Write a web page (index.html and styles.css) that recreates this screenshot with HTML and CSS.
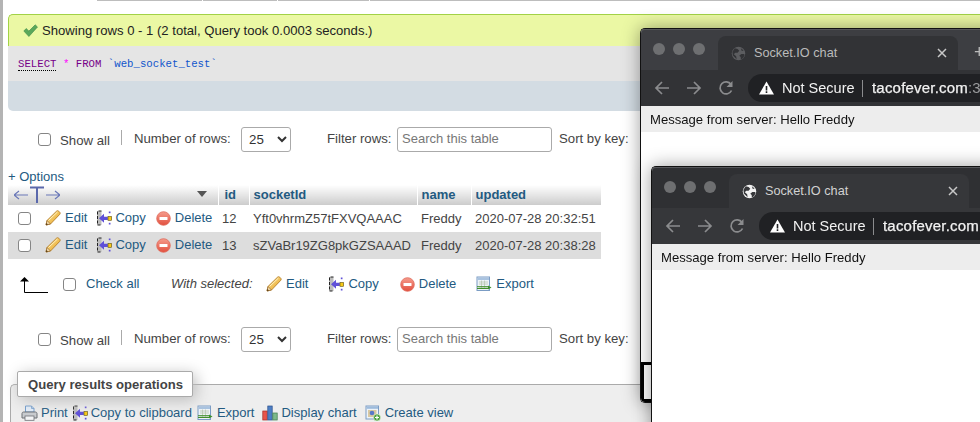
FILE: index.html
```html
<!DOCTYPE html>
<html lang="en">
<head>
<meta charset="utf-8">
<title>phpMyAdmin and Socket.IO chat</title>
<link rel="stylesheet" href="styles.css">
</head>
<body>
<svg class="defs" width="0" height="0" aria-hidden="true">
  <defs>
    <linearGradient id="redg" x1="0" y1="0" x2="0" y2="1"><stop offset="0" stop-color="#f59c8c"/><stop offset="1" stop-color="#e2503f"/></linearGradient>
    <linearGradient id="peng" x1="0" y1="0" x2="1" y2="1"><stop offset="0" stop-color="#fbe08a"/><stop offset="1" stop-color="#e8a52c"/></linearGradient>
    <symbol id="i-pencil" viewBox="0 0 16 16">
      <path d="M1 15l1-4.500L11.500 1.200c.7-.6 1.600-.6 2.200 0l1 1c.6.7.6 1.500 0 2.200L5.500 14z" fill="url(#peng)" stroke="#b5802a" stroke-width=".9" stroke-linejoin="round"/>
      <path d="M1 15l1-4.500 3.500 3.500z" fill="#f3d9a8" stroke="#8a5a20" stroke-width=".6"/>
      <path d="M1 15l.4-2 1.600 1.600z" fill="#4a3210"/>
      <path d="M3.500 10.500L12.500 2" stroke="#fff3c4" stroke-width="1"/>
    </symbol>
    <symbol id="i-copy" viewBox="0 0 15 16">
      <rect x="0" y="1" width="4.500" height="14" fill="#bdbdbd"/>
      <path d="M4.500 1H.5v14h4" fill="none" stroke="#222" stroke-width="1" stroke-dasharray="3 1.500"/>
      <path d="M2 8.300l5-4.500v2.900h3.800v3.200H7v2.900z" fill="#5f50d8"/>
      <rect x="11" y="6.500" width="3.600" height="3.800" fill="#f7c916" stroke="#5d4e10" stroke-width=".6"/>
      <rect x="11.800" y="1.500" width="1.700" height="1.700" fill="#5f50d8"/>
      <rect x="11.800" y="12.800" width="1.700" height="1.700" fill="#5f50d8"/>
    </symbol>
    <symbol id="i-del" viewBox="0 0 15 15">
      <circle cx="7.500" cy="7.500" r="6.800" fill="url(#redg)" stroke="#e06a5a" stroke-width=".8"/>
      <rect x="3.500" y="6" width="8" height="3" rx=".6" fill="#fff"/>
    </symbol>
    <symbol id="i-export" viewBox="0 0 16 16">
      <rect x="1" y="1" width="12.500" height="13.500" fill="#eef3f8" stroke="#7b9cc4"/>
      <rect x="1.500" y="1.500" width="11.500" height="2.500" fill="#a9c3e0"/>
      <path d="M3 6h9M3 8h9M3 11h9M5.500 4.500v8M8.500 4.500v8" stroke="#b8c6b0" stroke-width=".8"/>
      <path d="M1 10.700h11.500M1 12.500h11.500" stroke="#3f8f2c" stroke-width="1"/>
      <path d="M12 9.500l3.500 2-3.500 2z" fill="#3f8f2c"/>
    </symbol>
    <symbol id="i-print" viewBox="0 0 17 16">
      <path d="M4.500 1h6l2.500 2.500V7h-8.500z" fill="#e4eefa" stroke="#6f9bcc"/>
      <path d="M10.500 1v2.500H13" fill="none" stroke="#6f9bcc" stroke-width=".8"/>
      <path d="M2.500 7h12c.8 0 1.500.7 1.500 1.500V13H1V8.500C1 7.700 1.700 7 2.500 7z" fill="#c9ccd0" stroke="#6d7075"/>
      <rect x="4" y="11" width="9" height="4.300" fill="#f3f4f6" stroke="#6d7075" stroke-width=".8"/>
    </symbol>
    <symbol id="i-chart" viewBox="0 0 16 16">
      <rect x=".8" y="6" width="4.400" height="9" fill="#e8544a" stroke="#a52a24" stroke-width=".7"/>
      <rect x="5.800" y="1" width="4.400" height="14" fill="#4d7ec4" stroke="#2a4f8c" stroke-width=".7"/>
      <rect x="10.800" y="8" width="4.400" height="7" fill="#7cb98a" stroke="#3f7c4c" stroke-width=".7"/>
    </symbol>
    <symbol id="i-view" viewBox="0 0 16 16">
      <rect x="1" y="1" width="12.500" height="13" fill="#eef3f8" stroke="#7b9cc4"/>
      <rect x="1.500" y="1.500" width="11.500" height="2.300" fill="#9dbbdc"/>
      <rect x="3" y="5" width="8.500" height="7" fill="#d8c8a0"/>
      <circle cx="7" cy="8" r="2.300" fill="#5878c8"/>
      <circle cx="12" cy="12.500" r="3.500" fill="#4aa03c" stroke="#e8f5e0" stroke-width=".6"/>
      <path d="M10 12.500h4M12 10.500v4" stroke="#fff" stroke-width="1.200"/>
    </symbol>
    <symbol id="i-globe" viewBox="0 0 16 16">
      <circle cx="8" cy="8" r="7.200" fill="currentColor"/>
      <path d="M4 2.500l3 .8 1.800 1.800-1.800 2-2.500.2-1.500 1.500 2.500 2.200.5 3L2 10 1.500 6zM11 8.500h2.800l.8 1-1.800 3.500-2.300 1.300-.2-2.500-1.500-1.500zM10.500 2.300l3 2.500-2 .5z" fill="var(--globe-cut)"/>
    </symbol>
    <symbol id="i-back" viewBox="0 0 16 16"><path d="M15 8H2M8 2L2 8l6 6" fill="none" stroke="currentColor" stroke-width="1.700"/></symbol>
    <symbol id="i-forward" viewBox="0 0 16 16"><path d="M1 8h13M8 2l6 6-6 6" fill="none" stroke="currentColor" stroke-width="1.700"/></symbol>
    <symbol id="i-reload" viewBox="0 0 16 16"><path d="M13.500 10.500A6 6 0 1 1 13 4.500" fill="none" stroke="currentColor" stroke-width="1.700"/><path d="M14.500 1v6h-6z" fill="currentColor"/></symbol>
    <symbol id="i-warn" viewBox="0 0 15 14"><path d="M7.500.5L15 13.500H0z" fill="#fff"/><path d="M6.700 5h1.600v4.500H6.700zM6.700 10.300h1.600v1.600H6.700z" fill="#202124"/></symbol>
    <symbol id="i-x" viewBox="0 0 10 10"><path d="M1 1l8 8M9 1L1 9" stroke="currentColor" stroke-width="1.500"/></symbol>
  </defs>
</svg>

<main class="page">
  <div class="topline"><i class="seg s1"></i><i class="seg s2"></i><i class="seg s3"></i><i class="seg s4"></i></div>

  <div class="notice">
    <svg class="check" viewBox="0 0 15 13" width="15" height="13"><path d="M.8 7l2.400-2.500 2.700 2.600L12.200.8 14.500 3 5.900 12.500z" fill="#5aa85a" stroke="#3f8a4a" stroke-width=".6"/></svg>
    <span>Showing rows 0 - 1 (2 total, Query took 0.0003 seconds.)</span>
  </div>
  <div class="sql"><span class="kw dotted">SELECT</span> <span class="star">*</span> <span class="kw">FROM</span> <span class="str">`web_socket_test`</span></div>
  <div class="sqlbar"></div>

  <div class="navrow nav-first">
    <input class="cb cb-showall" type="checkbox" aria-label="Show all">
    <span class="showall">Show all</span>
    <i class="vsep"></i>
    <span class="lbl-rows">Number of rows:</span>
    <select class="rows-select"><option>25</option></select>
    <span class="lbl-filter">Filter rows:</span>
    <input class="search" type="text" placeholder="Search this table">
    <span class="lbl-sort">Sort by key:</span>
  </div>

  <div class="options"><a>+ Options</a></div>

  <table class="results">
    <colgroup><col class="c1"><col class="c2"><col class="c3"><col class="c4"><col class="c5"></colgroup>
    <thead>
      <tr>
        <th class="th-tools">
          <div class="th-inner">
            <svg class="tarrows" viewBox="0 0 46 18" width="46" height="18"><path d="M0 9h14M5 5L0 9l5 4M32 9h14M41 5l5 4-5 4" fill="none" stroke="#6a78b8" stroke-width="1.200"/><path d="M16 1.500h14M23 1.500V17" fill="none" stroke="#5a68ac" stroke-width="2"/></svg>
            <i class="tri"></i>
          </div>
        </th>
        <th class="th-id">id</th><th>socketId</th><th>name</th><th>updated</th>
      </tr>
    </thead>
    <tbody>
      <tr>
        <td class="tools">
          <input class="cb" type="checkbox" aria-label="Select row">
          <a class="act a-edit"><svg class="ic" width="16" height="16"><use href="#i-pencil"/></svg>Edit</a>
          <a class="act a-copy"><svg class="ic" width="15" height="16"><use href="#i-copy"/></svg>Copy</a>
          <a class="act a-del"><svg class="ic" width="15" height="15"><use href="#i-del"/></svg>Delete</a>
        </td>
        <td>12</td><td>Yft0vhrmZ57tFXVQAAAC</td><td>Freddy</td><td>2020-07-28 20:32:51</td>
      </tr>
      <tr class="alt">
        <td class="tools">
          <input class="cb" type="checkbox" aria-label="Select row">
          <a class="act a-edit"><svg class="ic" width="16" height="16"><use href="#i-pencil"/></svg>Edit</a>
          <a class="act a-copy"><svg class="ic" width="15" height="16"><use href="#i-copy"/></svg>Copy</a>
          <a class="act a-del"><svg class="ic" width="15" height="15"><use href="#i-del"/></svg>Delete</a>
        </td>
        <td>13</td><td>sZVaBr19ZG8pkGZSAAAD</td><td>Freddy</td><td>2020-07-28 20:38:28</td>
      </tr>
    </tbody>
  </table>

  <div class="checkall">
    <svg class="arrow-ltr" viewBox="0 0 28 16" width="28" height="16"><path d="M4.500 3v12.500H28" fill="none" stroke="#000" stroke-width="1"/><path d="M4.500 0L9 4.500H0z" fill="#000"/></svg>
    <input class="cb" type="checkbox" aria-label="Check all">
    <a class="checkall-link">Check all</a>
    <em class="withsel">With selected:</em>
    <a class="bulk b-edit"><svg class="ic" width="16" height="16"><use href="#i-pencil"/></svg>Edit</a>
    <a class="bulk b-copy"><svg class="ic" width="15" height="16"><use href="#i-copy"/></svg>Copy</a>
    <a class="bulk b-del"><svg class="ic" width="15" height="15"><use href="#i-del"/></svg>Delete</a>
    <a class="bulk b-exp"><svg class="ic" width="16" height="16"><use href="#i-export"/></svg>Export</a>
  </div>

  <div class="navrow nav-second">
    <input class="cb cb-showall" type="checkbox" aria-label="Show all">
    <span class="showall">Show all</span>
    <i class="vsep"></i>
    <span class="lbl-rows">Number of rows:</span>
    <select class="rows-select"><option>25</option></select>
    <span class="lbl-filter">Filter rows:</span>
    <input class="search" type="text" placeholder="Search this table">
    <span class="lbl-sort">Sort by key:</span>
  </div>

  <section class="ops">
    <div class="legend">Query results operations</div>
    <div class="ops-links">
      <a class="op op-print"><svg class="ic" width="17" height="16"><use href="#i-print"/></svg>Print</a>
      <a class="op op-copy"><svg class="ic" width="15" height="16"><use href="#i-copy"/></svg>Copy to clipboard</a>
      <a class="op op-exp"><svg class="ic" width="16" height="16"><use href="#i-export"/></svg>Export</a>
      <a class="op op-chart"><svg class="ic" width="16" height="16"><use href="#i-chart"/></svg>Display chart</a>
      <a class="op op-view"><svg class="ic" width="16" height="16"><use href="#i-view"/></svg>Create view</a>
    </div>
  </section>
</main>

<article class="win win-back">
  <header class="strip">
    <div class="lights"><i></i><i></i><i></i></div>
    <div class="tab">
      <svg class="globe" width="15" height="15"><use href="#i-globe"/></svg>
      <span class="tab-title">Socket.IO chat</span>
      <svg class="tab-x" width="10" height="10"><use href="#i-x"/></svg>
    </div>
    <div class="newtab"><span>+</span></div>
  </header>
  <div class="toolbar">
    <svg class="nav-i" width="16" height="16"><use href="#i-back"/></svg>
    <svg class="nav-i" width="16" height="16"><use href="#i-forward"/></svg>
    <svg class="nav-i" width="16" height="16"><use href="#i-reload"/></svg>
    <div class="omni">
      <svg class="warn" width="15" height="14"><use href="#i-warn"/></svg>
      <span class="insecure">Not Secure</span><i class="omni-sep"></i><span class="host">tacofever.com</span><span class="port">:3</span>
    </div>
  </div>
  <div class="content">
    <div class="msg">Message from server: Hello Freddy</div>
    <form class="chatform"><i class="chatinput"></i></form>
  </div>
</article>

<article class="win win-front">
  <header class="strip">
    <div class="lights"><i></i><i></i><i></i></div>
    <div class="tab">
      <svg class="globe" width="15" height="15"><use href="#i-globe"/></svg>
      <span class="tab-title">Socket.IO chat</span>
      <svg class="tab-x" width="10" height="10"><use href="#i-x"/></svg>
    </div>
  </header>
  <div class="toolbar">
    <svg class="nav-i" width="16" height="16"><use href="#i-back"/></svg>
    <svg class="nav-i" width="16" height="16"><use href="#i-forward"/></svg>
    <svg class="nav-i" width="16" height="16"><use href="#i-reload"/></svg>
    <div class="omni">
      <svg class="warn" width="15" height="14"><use href="#i-warn"/></svg>
      <span class="insecure">Not Secure</span><i class="omni-sep"></i><span class="host">tacofever.com</span>
    </div>
  </div>
  <div class="content">
    <div class="msg">Message from server: Hello Freddy</div>
  </div>
</article>
</body>
</html>
```
FILE: styles.css
```css
* { box-sizing: border-box; }
html, body { margin: 0; padding: 0; width: 980px; height: 422px; overflow: hidden; background: #fff; }
body { position: relative; font: 13px/16px "Liberation Sans", Arial, sans-serif; color: #444; }
a { color: #235a81; }
.defs { position: absolute; }
.ic { flex: none; display: block; }

.page { width: 980px; height: 422px; border-left: 3px solid #b4b4b4; overflow: hidden; }

.topline { display: flex; height: 1px; margin-left: 94px; gap: 1px; }
.seg { display: block; height: 1px; background: #bdbdbd; }
.s1 { width: 105px; } .s2 { width: 74px; } .s3 { width: 91px; } .s4 { flex: 1; }

.notice { display: flex; align-items: center; height: 32px; margin: 13px 0 0 5px; padding-left: 14px; background: #ebf8a4; border: 1px solid #a2d246; border-bottom: 0; border-right: 0; border-radius: 5px 0 0 0; color: #222; font-size: 13.1px; }
.check { margin-right: 4px; }

.sql { height: 35px; margin-left: 5px; padding: 10px 0 0 10px; background: #e5e5e5; font: 10.7px/16px "Liberation Mono", "Courier New", monospace; white-space: pre; }
.kw { color: #708; }
.dotted { border-bottom: 1px dotted #000; }
.star { color: #f0f; }
.str { color: #15c; }
.sqlbar { height: 30px; margin-left: 5px; background: #d3dce3; border-radius: 0 0 0 5px; }

.navrow { display: flex; align-items: center; height: 25px; font-size: 13.2px; }
.nav-first { margin-top: 16px; }
.nav-second { margin-top: 33px; }
.cb { appearance: none; display: block; flex: none; width: 13px; height: 13px; margin: 0; background: #fff; border: 1px solid #858585; border-radius: 3px; }
.cb-showall { margin-left: 35px; }
.showall { margin-left: 9px; width: 50px; margin-top: 3px; white-space: nowrap; }
.vsep { display: block; width: 1px; height: 15px; margin: -5px 0 0 11px; background: #aaa; }
.lbl-rows { margin: -1px 0 0 12px; width: 107px; white-space: nowrap; }
.rows-select { width: 50px; height: 25px; padding: 0 0 1px 3px; background-color: #fff; border: 1px solid #aaa; border-radius: 3px; color: #333; font: 13.3px "Liberation Sans", Arial, sans-serif; }
.lbl-filter { margin: -1px 0 0 36px; width: 70px; white-space: nowrap; }
.search { width: 155px; height: 25px; padding: 0 4px 2px; border: 1px solid #aaa; border-radius: 3px; color: #333; font: 13px "Liberation Sans", Arial, sans-serif; outline: 0; }
.search::placeholder { color: #777; opacity: 1; }
.lbl-sort { margin: -1px 0 0 7px; white-space: nowrap; }

.options { height: 16px; margin: 17px 0 0 5px; font-size: 13px; }

.results { width: 593px; margin: 0 0 0 5px; border-collapse: collapse; table-layout: fixed; }
.c1 { width: 210px; } .c2 { width: 31px; } .c3 { width: 168px; } .c4 { width: 54px; } .c5 { width: 130px; }
.results th { height: 20px; padding: 0 4px; border-left: 1px solid #fff; background: linear-gradient(#fff, #ccc); color: #235a81; font-weight: 700; text-align: left; }
.results th.th-tools { padding: 0; border-left: 0; }
.results th.th-id { padding-left: 6px; }
.th-inner { display: flex; align-items: center; height: 20px; padding-left: 6px; }
.tri { display: block; width: 0; height: 0; margin: -2px 0 0 137px; border: 5.500px solid transparent; border-top: 6.500px solid #555; border-bottom: 0; }
.results td { height: 27px; padding: 0 4px; color: #444; white-space: nowrap; }
.results .alt td { background: #ddd; }
.results td.tools { display: flex; align-items: center; height: 27px; padding: 0 0 0 10px; color: #235a81; }
.act { display: flex; align-items: center; gap: 4px; margin-top: -1px; white-space: nowrap; }
.a-edit { margin-left: 14px; }
.a-copy { margin-left: 10px; gap: 3px; }
.a-del { margin-left: 10px; gap: 4px; }

.checkall { display: flex; align-items: center; height: 20px; margin-top: 15px; }
.arrow-ltr { margin: 2px 0 0 17px; }
.checkall .cb { margin-left: 15px; }
.checkall-link { margin-left: 10px; width: 54px; white-space: nowrap; }
.withsel { margin-left: 31px; width: 82px; white-space: nowrap; }
.bulk { display: flex; align-items: center; gap: 4px; white-space: nowrap; }
.b-edit { margin-left: 13px; }
.b-copy { margin-left: 21px; gap: 4px; }
.b-del { margin-left: 21px; gap: 4px; }
.b-exp { margin-left: 20px; gap: 4px; }

.ops { height: 60px; margin: 32px 0 0 7px; background: #eee; border: 1px solid #aaa; border-width: 1px 0 0 1px; border-radius: 5px 0 0 0; }
.legend { width: 176px; height: 26px; margin: -14px 0 0 6px; padding-left: 10px; background: #fff; border: 1px solid #aaa; border-radius: 2px; box-shadow: 3px 3px 15px #bbb; color: #444; font-weight: 700; font-size: 13.1px; line-height: 25px; position: relative; }
.ops-links { display: flex; align-items: center; height: 16px; margin-top: 8px; padding-left: 10px; }
.op { display: flex; align-items: center; gap: 3px; white-space: nowrap; }
.op-copy { margin-left: 5px; }
.op-exp { margin-left: 5px; gap: 4px; }
.op-chart { margin-left: 8px; gap: 3px; }
.op-view { margin-left: 8px; gap: 4px; }

/* floating browser windows on the desktop */
.win { position: absolute; display: flex; flex-direction: column; width: 420px; background: #fff; border: 1px solid #111; border-right: 0; border-radius: 5px 0 0 5px; color: #ddd; filter: drop-shadow(0 0 9px rgba(0,0,0,.38)); }
.win-back { left: 640px; top: 28px; height: 375px; }
.win-front { left: 651px; top: 166px; height: 320px; }

.strip { display: flex; align-items: flex-end; height: 41px; border-radius: 4px 0 0 0; box-shadow: inset 0 1px 0 #55565a; }
.win-back .strip { background: #3d3e42; }
.win-front .strip { background: #2f3033; }
.lights { display: flex; gap: 8px; align-self: flex-start; margin: 14px 0 0 12px; width: 65px; flex: none; }
.lights i { display: block; width: 12px; height: 12px; border-radius: 50%; background: #6e6f71; }
.tab { display: flex; align-items: center; flex: none; width: 240px; height: 34px; padding-left: 13px; border-radius: 8px 8px 0 0; font-size: 13px; }
.win-back .tab { background: #323336; color: #bbb; --globe-cut: #323336; }
.win-front .tab { background: #36373a; color: #d2d2d2; --globe-cut: #36373a; }
.globe { flex: none; }
.win-back .globe { color: #5c5d60; }
.win-front .globe { color: #f2f2f2; }
.tab-title { margin-left: 8px; width: 183px; white-space: nowrap; font-size: 12.7px; }
.tab-x { flex: none; color: #c8c8c8; }
.newtab { flex: 1; height: 34px; padding: 8px 0 0 16px; font-size: 18px; color: #bbb; }
.newtab span { display: block; }

.toolbar { display: flex; align-items: center; height: 36px; padding-left: 13px; }
.win-back .toolbar { background: #323336; }
.win-front .toolbar { background: #36373a; }
.nav-i { flex: none; margin-right: 16px; color: #8b8c8e; }
.omni { display: flex; align-items: center; flex: none; width: 300px; height: 28px; margin-left: -2px; padding-left: 11px; background: #202124; border-radius: 14px 0 0 14px; white-space: nowrap; font-size: 14.5px; color: #f2f2f2; }
.warn { flex: none; margin-right: 8px; }
.insecure { width: 73px; }
.omni-sep { display: block; width: 1px; height: 17px; margin: 0 9px 0 7px; background: #8b8c8e; }
.host { font-size: 15px; letter-spacing: .2px; -webkit-text-stroke: .25px #f2f2f2; }
.port { font-size: 15px; color: #9a9b9d; }

.content { position: relative; flex: 1; background: #fff; border-radius: 0 0 0 4px; }
.msg { height: 26px; padding: 2px 0 0 9px; background: #ededed; color: #111; font-size: 13.1px; line-height: 24px; white-space: nowrap; }
.chatform { position: absolute; left: 0; right: 0; bottom: 0; height: 40px; padding: 3px; background: #000; border-radius: 0 0 0 4px; }
.chatinput { display: block; height: 34px; background: #fff; }
```
